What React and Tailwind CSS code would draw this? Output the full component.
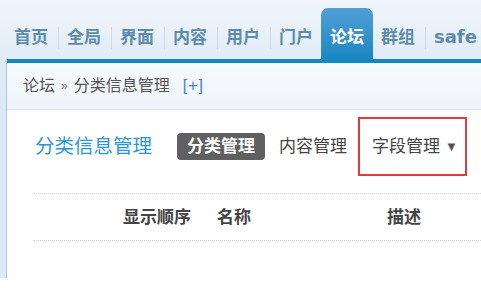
import React from "react";

const navItems = ["首页", "全局", "界面", "内容", "用户", "门户", "论坛", "群组", "safe"];

export default function App() {
  return (
    <div className="w-[481px] h-[288px] bg-white overflow-hidden font-['Liberation_Sans','Noto_Sans_CJK_SC',sans-serif]">
      {/* top nav */}
      <div className="h-[59px] bg-gradient-to-b from-[#f0f5fb] to-[#e2ecf6] flex items-end pl-[5px] whitespace-nowrap">
        {navItems.map((t, i) => {
          const active = t === "论坛";
          const prevActive = i > 0 && navItems[i - 1] === "论坛";
          const nextActive = navItems[i + 1] === "论坛";
          const latin = t === "safe";
          return (
            <React.Fragment key={t}>
              {i > 0 && !active && !prevActive && (
                <span className="shrink-0 w-px h-[22px] mb-[10px] bg-[#cddbe7]" />
              )}
              {active ? (
                <div className="shrink-0 h-[51px] px-[9px] rounded-t-[7px] bg-gradient-to-b from-[#4f9fd4] to-[#1587c2] flex items-center pt-[7px] text-[17px] font-bold text-white leading-none">
                  {t}
                </div>
              ) : (
                <div
                  className={`shrink-0 h-[51px] ${i === 0 ? "pl-[9px]" : "pl-[8px]"} ${nextActive ? "pr-[8px]" : "pr-[10px]"} flex items-center pt-[7px] font-bold text-[#5d8cab] leading-none ${latin ? "text-[18px] font-['DejaVu_Sans',sans-serif]" : "text-[17px]"}`}
                >
                  {t}
                </div>
              )}
            </React.Fragment>
          );
        })}
      </div>

      {/* body */}
      <div className="h-[219px] flex">
        <div className="w-[7px] shrink-0 bg-[#dbeaf6] border-r border-[#aecbe2]" />
        <div className="flex-1 flex flex-col">
          <div className="h-[4px] bg-[#1289c3]" />
          {/* breadcrumb */}
          <div className="h-[47px] bg-gradient-to-b from-[#f7fafd] to-[#eef4fa] border-b border-[#dfe8f0] flex items-center pl-[16px] text-[16px] text-[#555] shadow-[0_1px_2px_rgba(0,0,0,0.05)] whitespace-nowrap">
            <span>论坛</span>
            <span className="mx-[6px] text-[12px] text-[#777]">»</span>
            <span>分类信息管理</span>
            <span className="ml-[13px] text-[#3d7fc0] tracking-[1px]">[+]</span>
          </div>
          {/* title row */}
          <div className="flex items-center pt-[7px] pl-[28px] whitespace-nowrap">
            <span className="text-[19.5px] text-[#2b97d2] leading-none">分类信息管理</span>
            <span className="ml-[25px] h-[27px] px-[10px] rounded-[4px] bg-[#606060] text-white font-bold text-[17px] flex items-center leading-none">
              分类管理
            </span>
            <span className="ml-[14px] text-[17px] text-[#444] leading-none">内容管理</span>
            <div className="ml-[11px] w-[109px] h-[59px] border-2 border-[#e23b3b] flex items-center pl-[12px] text-[17px] text-[#444] leading-none">
              字段管理
              <span className="ml-[5px] text-[13px] text-[#555]">▼</span>
            </div>
          </div>
          {/* table header */}
          <div className="ml-[26px] mt-[17px] border-t border-dotted border-[#d4d4d4]" />
          <div className="ml-[26px] h-[46px] flex items-center text-[17px] font-bold text-[#444] leading-none whitespace-nowrap">
            <span className="ml-[90px]">显示顺序</span>
            <span className="ml-[26px]">名称</span>
            <span className="ml-[136px]">描述</span>
          </div>
          <div className="ml-[26px] border-t border-dotted border-[#d4d4d4]" />
        </div>
      </div>
    </div>
  );
}
